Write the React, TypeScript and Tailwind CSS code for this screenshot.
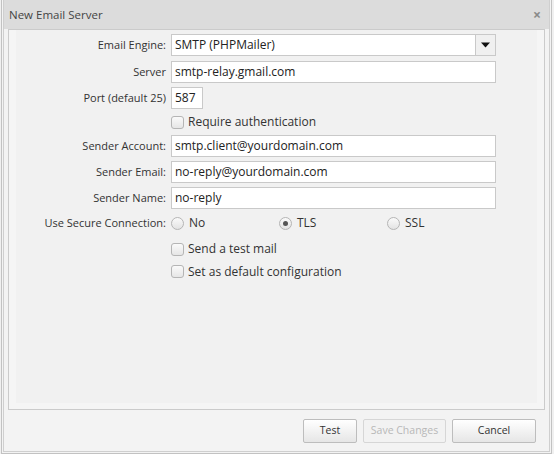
import React from "react";

const font = { fontFamily: '"Open Sans", "Noto Sans", sans-serif' };

function Label({ children }: { children: React.ReactNode }) {
  return <div className="w-[162px] shrink-0 pr-[5px] text-right text-[11px] text-[#333]">{children}</div>;
}

function TextInput({ value, width = "w-[325px]" }: { value: string; width?: string }) {
  return (
    <div className={`${width} h-[22px] border border-[#c9c9c9] bg-white px-[3px] flex items-center text-[12px] text-[#222]`}>
      {value}
    </div>
  );
}

function Checkbox({ label }: { label: string }) {
  return (
    <div className="flex items-center">
      <div className="w-[162px] shrink-0" />
      <span className="w-[13px] h-[13px] rounded-[3px] border border-[#b5b5b5] bg-gradient-to-b from-[#fafafa] to-[#e6e6e6]" />
      <span className="ml-[4px] text-[12px] text-[#333]">{label}</span>
    </div>
  );
}

function Radio({ label, checked }: { label: string; checked?: boolean }) {
  return (
    <div className="w-[108px] flex items-center">
      <span className="w-[13px] h-[13px] rounded-full border border-[#b5b5b5] bg-gradient-to-b from-[#fafafa] to-[#e3e3e3] flex items-center justify-center">
        {checked && <span className="w-[5px] h-[5px] rounded-full bg-[#555]" />}
      </span>
      <span className="ml-[5px] text-[12px] text-[#333]">{label}</span>
    </div>
  );
}

function Button({ label, disabled }: { label: string; disabled?: boolean }) {
  return (
    <div
      className={`h-[24px] flex items-center justify-center rounded-[2px] border text-[10.5px] ${
        disabled
          ? "border-[#d6d6d6] text-[#b8b8b8] bg-[#f2f2f2]"
          : "border-[#bdbdbd] text-[#333] bg-gradient-to-b from-[#ffffff] to-[#e6e6e6]"
      }`}
    >
      {label}
    </div>
  );
}

export default function App() {
  return (
    <div className="w-[554px] h-[454px] bg-[#f0f0f0] pl-[1px] pr-[2px] overflow-hidden" style={font}>
      <div className="h-full border-x border-b border-[#c2c2c2] px-[1px] pb-[1px] bg-[#f3f3f3]">
        <div className="h-full border-x border-b border-[#cfcfcf] flex flex-col">
          {/* Title bar */}
          <div className="h-[29px] shrink-0 bg-[#dcdcdc] flex items-center justify-between pl-[5px] pr-[8px]">
            <span className="text-[11.5px] text-[#444]">New Email Server</span>
            <span className="text-[#8a8a8a] text-[14px] font-bold leading-none">×</span>
          </div>

          {/* Body */}
          <div className="mx-[4px] h-[381px] border border-[#cbcbcb] bg-[#f5f5f5] flex flex-col">
            <div className="flex-1 flex flex-col mx-[7px] mb-[6px] bg-[#f1f1f1]">
              <div className="-ml-[7px] flex flex-col">
                <div className="flex items-center mt-[4px]">
                  <Label>Email Engine:</Label>
                  <div className="w-[325px] h-[22px] border border-[#c9c9c9] bg-white flex items-center">
                    <span className="flex-1 px-[3px] text-[12px] text-[#222]">SMTP (PHPMailer)</span>
                    <span className="w-[20px] h-full border-l border-[#c9c9c9] bg-[#f0f0f0] flex items-center justify-center">
                      <svg width="9" height="6" viewBox="0 0 9 6">
                        <path d="M0 0.5h9L4.5 5.5z" fill="#111" />
                      </svg>
                    </span>
                  </div>
                </div>
                <div className="flex items-center mt-[5px]">
                  <Label>Server</Label>
                  <TextInput value="smtp-relay.gmail.com" />
                </div>
                <div className="flex items-center mt-[4px]">
                  <Label>Port (default 25)</Label>
                  <TextInput value="587" width="w-[32px]" />
                </div>
                <div className="h-[26px] flex items-center">
                  <Checkbox label="Require authentication" />
                </div>
                <div className="flex items-center">
                  <Label>Sender Account:</Label>
                  <TextInput value="smtp.client@yourdomain.com" />
                </div>
                <div className="flex items-center mt-[4px]">
                  <Label>Sender Email:</Label>
                  <TextInput value="no-reply@yourdomain.com" />
                </div>
                <div className="flex items-center mt-[4px]">
                  <Label>Sender Name:</Label>
                  <TextInput value="no-reply" />
                </div>
                <div className="h-[28px] flex items-center">
                  <Label>Use Secure Connection:</Label>
                  <Radio label="No" />
                  <Radio label="TLS" checked />
                  <Radio label="SSL" />
                </div>
                <div className="h-[24px] flex items-center">
                  <Checkbox label="Send a test mail" />
                </div>
                <div className="h-[21px] flex items-center">
                  <Checkbox label="Set as default configuration" />
                </div>
              </div>
            </div>
          </div>

          {/* Footer */}
          <div className="flex-1 flex items-center justify-end gap-[6px] pr-[13px]">
            <div className="w-[54px]">
              <Button label="Test" />
            </div>
            <div className="w-[83px]">
              <Button label="Save Changes" disabled />
            </div>
            <div className="w-[84px]">
              <Button label="Cancel" />
            </div>
          </div>
        </div>
      </div>
    </div>
  );
}
